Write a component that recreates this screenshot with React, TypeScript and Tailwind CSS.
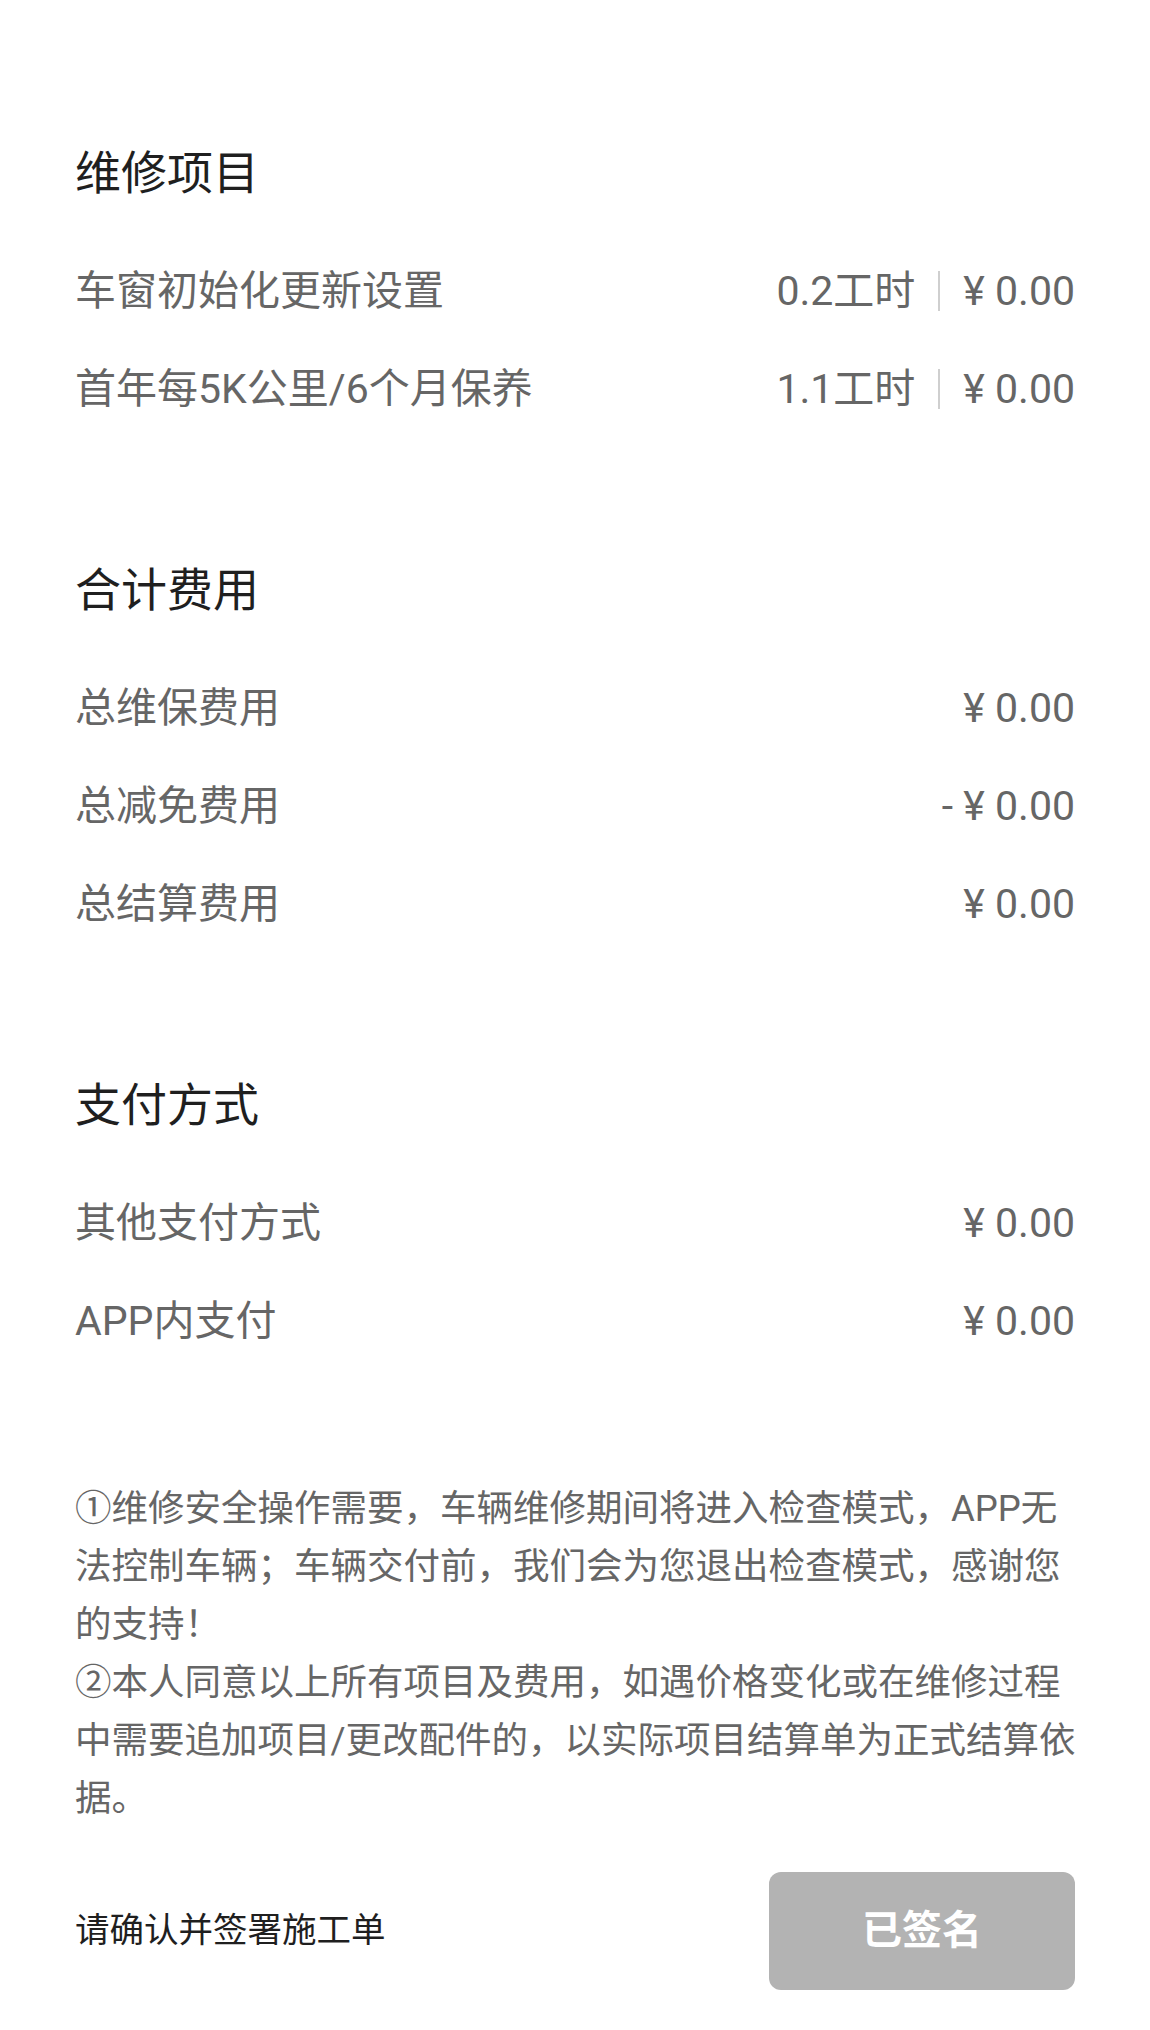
import React from "react";

type Row = { label: string; hours?: string; value: string };

const sections: { title: string; rows: Row[] }[] = [
  {
    title: "维修项目",
    rows: [
      { label: "车窗初始化更新设置", hours: "0.2工时", value: "¥ 0.00" },
      { label: "首年每5K公里/6个月保养", hours: "1.1工时", value: "¥ 0.00" }
    ]
  },
  {
    title: "合计费用",
    rows: [
      { label: "总维保费用", value: "¥ 0.00" },
      { label: "总减免费用", value: "- ¥ 0.00" },
      { label: "总结算费用", value: "¥ 0.00" }
    ]
  },
  {
    title: "支付方式",
    rows: [
      { label: "其他支付方式", value: "¥ 0.00" },
      { label: "APP内支付", value: "¥ 0.00" }
    ]
  }
];

function Section({ title, rows }: { title: string; rows: Row[] }) {
  return (
    <section>
      <h2 className="flex h-[60px] items-center text-[46px] font-normal leading-[60px] text-[#1f1f1f]">
        {title}
      </h2>
      <div className="mt-[39px]">
        {rows.map((row) => (
          <div
            key={row.label}
            className="flex h-[98px] items-center justify-between text-[41px] leading-[60px] text-[#666666]"
          >
            <span>{row.label}</span>
            <span className="flex items-center">
              {row.hours ? (
                <>
                  <span>{row.hours}</span>
                  <span className="mx-[23px] h-[40px] w-[2px] bg-[#cfcfcf]" />
                </>
              ) : null}
              <span>{row.value}</span>
            </span>
          </div>
        ))}
      </div>
    </section>
  );
}

export default function App() {
  return (
    <div className="min-h-[2030px] w-full bg-white px-[75px] pt-[143px] pb-[40px] font-['Roboto','Noto_Sans_CJK_SC',sans-serif]">
      <div className="flex flex-col gap-[122px]">
        {sections.map((s) => (
          <Section key={s.title} title={s.title} rows={s.rows} />
        ))}
      </div>

      <div className="mt-[110px] mr-[-10px] text-[36.5px] leading-[58px] text-[#666666]">
        <p>①维修安全操作需要，车辆维修期间将进入检查模式，APP无法控制车辆；车辆交付前，我们会为您退出检查模式，感谢您的支持！</p>
        <p>②本人同意以上所有项目及费用，如遇价格变化或在维修过程中需要追加项目/更改配件的，以实际项目结算单为正式结算依据。</p>
      </div>

      <div className="mt-[44px] flex h-[118px] items-center justify-between">
        <span className="text-[34.5px] text-[#1f1f1f]">请确认并签署施工单</span>
        <button
          type="button"
          className="flex h-[118px] w-[306px] items-center justify-center rounded-[12px] bg-[#b3b3b3] text-[40px] font-bold text-white"
        >
          已签名
        </button>
      </div>
    </div>
  );
}
